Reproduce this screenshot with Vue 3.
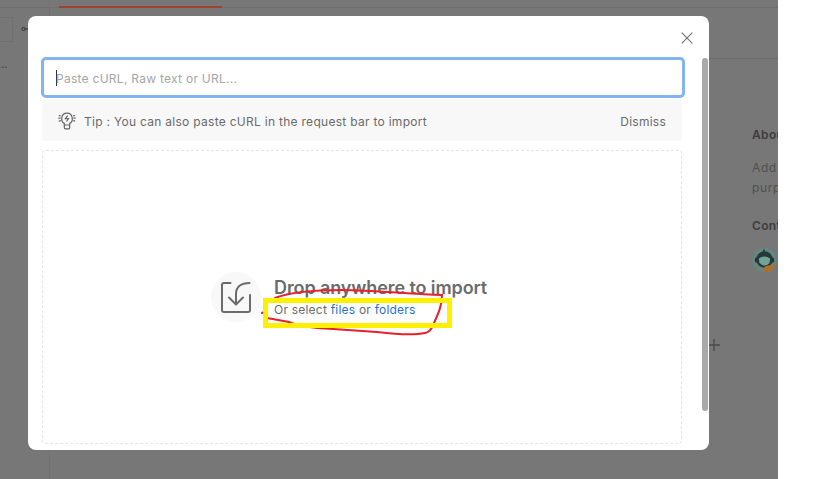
<script setup>
import { ref } from 'vue'

const source = ref('')
</script>

<template>
  <div class="screen">
    <div class="workspace">
      <div class="sidebar">
        <div class="tabline"></div>
        <div class="stub"></div>
        <span class="dots">...</span>
      </div>
      <div class="main">
        <div class="tabline"><i class="active-tab"></i></div>
      </div>
      <aside class="details">
        <div class="tabline"></div>
        <div class="toolbar"></div>
        <div class="info">
          <h3>Abou</h3>
          <p>Add<br />purp</p>
          <h3 class="second">Cont</h3>
          <svg class="avatar" width="26" height="26" viewBox="0 0 26 26">
            <circle cx="12.500" cy="13" r="12.300" fill="#65877f" />
            <path d="M12 2.500v4" stroke="#26383a" stroke-width="1.800" />
            <circle cx="12.500" cy="12.500" r="8.200" fill="#26383a" />
            <rect x="2.800" y="10.500" width="3" height="5" rx="1.500" fill="#26383a" />
            <rect x="19.200" y="10.500" width="3" height="5" rx="1.500" fill="#26383a" />
            <path d="M6.800 11.500q5.700-4 11.400 0l-.7 4.500q-5 5-10 0z" fill="#75a297" />
            <path d="M10.500 24q1-5 5-5.500l7.500-1q-2 8-9.500 7.500z" fill="#aa7129" />
          </svg>
        </div>
      </aside>
    </div>

    <svg class="node" width="8" height="8" viewBox="0 0 8 8">
      <circle cx="2.500" cy="4" r="1.600" fill="none" stroke="#333" /><path d="M4 4h4" stroke="#333" />
    </svg>
    <svg class="plus" width="12" height="12" viewBox="0 0 12 12">
      <path d="M6 0v12M0 6h12" stroke="#4a4a4a" stroke-width="1.300" />
    </svg>

    <section class="modal">
      <header>
        <svg width="12" height="12" viewBox="0 0 12 12">
          <path d="M.7.7l10.600 10.600M11.300.7L.7 11.300" stroke="#777" stroke-width="1.150" />
        </svg>
      </header>
      <div class="body">
        <div class="content">
          <div class="field">
            <i class="caret"></i>
            <input v-model="source" placeholder="Paste cURL, Raw text or URL..." />
          </div>
          <div class="tip">
            <svg width="18" height="18" viewBox="0 0 18 18" fill="none" stroke="#666" stroke-width="1.200">
              <path d="M6.300 13v-1.600C2.300 9.500 2.800 1.200 9 1.200s6.700 8.300 2.700 10.200V13zM6.300 13v2.500q0 1.300 1.300 1.300h2.800q1.300 0 1.300-1.300V13" />
              <path d="M9.700 3.600L7.400 6.600h3.100L8.500 9.500M.8 3.500l2 .4M.3 6.200h2.300M.8 9.200l2-.5M17.200 3.500l-2 .4M17.700 6.200h-2.300M17.200 9.200l-2-.5" />
            </svg>
            <span class="message">Tip : You can also paste cURL in the request bar to import</span>
            <span class="dismiss">Dismiss</span>
          </div>
          <div class="dropzone">
            <div class="badge">
              <svg width="30" height="31" viewBox="0 0 30 31" fill="none" stroke="#6b6b6b" stroke-width="2" stroke-linecap="round" stroke-linejoin="round">
                <path d="M9.500 1H3Q1 1 1 3v25q0 2 2 2h24q2 0 2-2V13" />
                <path d="M28.500 1C20 1 15 5 15 12v10M8 15.500l7 7 7-7" />
              </svg>
            </div>
            <div class="copy">
              <h2>Drop anywhere to import</h2>
              <p>Or select <a>files</a> or <a>folders</a></p>
            </div>
          </div>
        </div>
        <div class="scrollbar"></div>
      </div>
    </section>

    <svg class="scribble" width="200" height="54" viewBox="258 285 200 54" fill="none" stroke="#e8202a" stroke-width="2" stroke-linecap="round">
      <path d="M262 313L266 311M275 298C290 292 312 290 343 290C370 290 410 294 442 295C442 305 439 312 434 323Q431 332 425 333Q411 336 377 332L333 329Q300 327 289 322L267 318" />
    </svg>
    <div class="highlight"></div>
  </div>
</template>

<style>
body {
  background: #fff;
  overflow: hidden;
}
</style>

<style scoped>
.screen {
  position: relative;
  width: 819px;
  height: 479px;
  overflow: hidden;
  font-family: Inter, sans-serif;
  color: #6b6b6b;
}
.workspace {
  display: flex;
  width: 778px;
  height: 479px;
  background: #777;
  overflow: hidden;
}
.sidebar {
  width: 49px;
  border-right: 1px solid #727272;
}
.tabline {
  height: 7px;
  border-bottom: 1px solid #6f6f6f;
}
.stub {
  width: 12px;
  height: 23px;
  margin-top: 9px;
  border: 1px solid #707070;
  border-left: 0;
}
.dots {
  display: block;
  margin-top: 15px;
  margin-left: -2px;
  font-size: 11px;
  line-height: 14px;
  color: #444;
}
.main {
  flex: 1;
}
.active-tab {
  display: block;
  width: 163px;
  height: 1.500px;
  margin-left: 9px;
  transform: translateY(6px);
  background: #a0432b;
}
.details {
  width: 78px;
  overflow: hidden;
}
.toolbar {
  height: 50px;
  border-bottom: 1px solid #6d6d6d;
}
.info {
  padding: 67px 0 0 52px;
  white-space: nowrap;
}
.info h3 {
  margin: 0;
  font-size: 12px;
  line-height: 18px;
  font-weight: 600;
  letter-spacing: 0.350px;
  color: #3d3d3d;
}
.info p {
  margin: 14px 0 0;
  font-size: 12px;
  line-height: 20px;
  letter-spacing: 0.600px;
  color: #505050;
}
.info .second {
  margin-top: 19px;
}
.avatar {
  display: block;
  margin-top: 12px;
}
.node {
  position: absolute;
  left: 21px;
  top: 25px;
}
.plus {
  position: absolute;
  left: 708px;
  top: 339px;
}
.modal {
  position: absolute;
  left: 28px;
  top: 16px;
  width: 681px;
  height: 434px;
  box-sizing: border-box;
  border-radius: 8px;
  background: #fff;
}
header {
  display: flex;
  justify-content: flex-end;
  height: 41px;
  padding: 16px 16px 0 0;
  box-sizing: border-box;
}
.body {
  display: flex;
  justify-content: space-between;
  padding: 0 1px 0 13px;
}
.content {
  width: 644px;
}
.field {
  display: flex;
  align-items: center;
  height: 41px;
  box-sizing: border-box;
  padding: 1px 12px 0;
  border: 3px solid #82b3f3;
  border-radius: 5px;
}
.caret {
  width: 1px;
  height: 16px;
  margin-right: -1px;
  background: #333;
}
input {
  flex: 1;
  padding: 0;
  border: 0;
  outline: 0;
  background: none;
  font-family: inherit;
  font-size: 12px;
  letter-spacing: 0.270px;
}
input::placeholder {
  color: #a6a6a6;
}
.tip {
  display: flex;
  align-items: center;
  width: 640px;
  height: 41px;
  margin: 2px 0 0 1px;
  padding: 1px 16px 0;
  box-sizing: border-box;
  border-radius: 3px;
  background: #f8f8f8;
  font-size: 12px;
  white-space: nowrap;
}
.message {
  margin-left: 8px;
  letter-spacing: 0.285px;
}
.dismiss {
  margin-left: auto;
  letter-spacing: 0.250px;
}
.dropzone {
  display: flex;
  align-items: center;
  width: 640px;
  height: 294px;
  margin: 9px 0 0 1px;
  padding-left: 168px;
  box-sizing: border-box;
  border: 1px dashed #e6e6e6;
  border-radius: 4px;
}
.badge {
  display: grid;
  place-items: center;
  width: 50px;
  height: 50px;
  border-radius: 50%;
  background: #f8f8f8;
}
.copy {
  margin-left: 13px;
  white-space: nowrap;
}
h2 {
  margin: 0;
  font-size: 18px;
  line-height: 26px;
  font-weight: 600;
  letter-spacing: -0.100px;
}
.copy p {
  margin: 0;
  font-size: 12px;
  line-height: 18px;
  letter-spacing: 0.220px;
}
a {
  color: #1f72d8;
}
.scrollbar {
  width: 6px;
  height: 353px;
  margin-top: 1px;
  border-radius: 3px;
  background: #a9a9a9;
}
.scribble {
  position: absolute;
  left: 258px;
  top: 285px;
}
.highlight {
  position: absolute;
  left: 263px;
  top: 298px;
  width: 189px;
  height: 30px;
  box-sizing: border-box;
  border: 5px solid #fff000;
}
</style>
